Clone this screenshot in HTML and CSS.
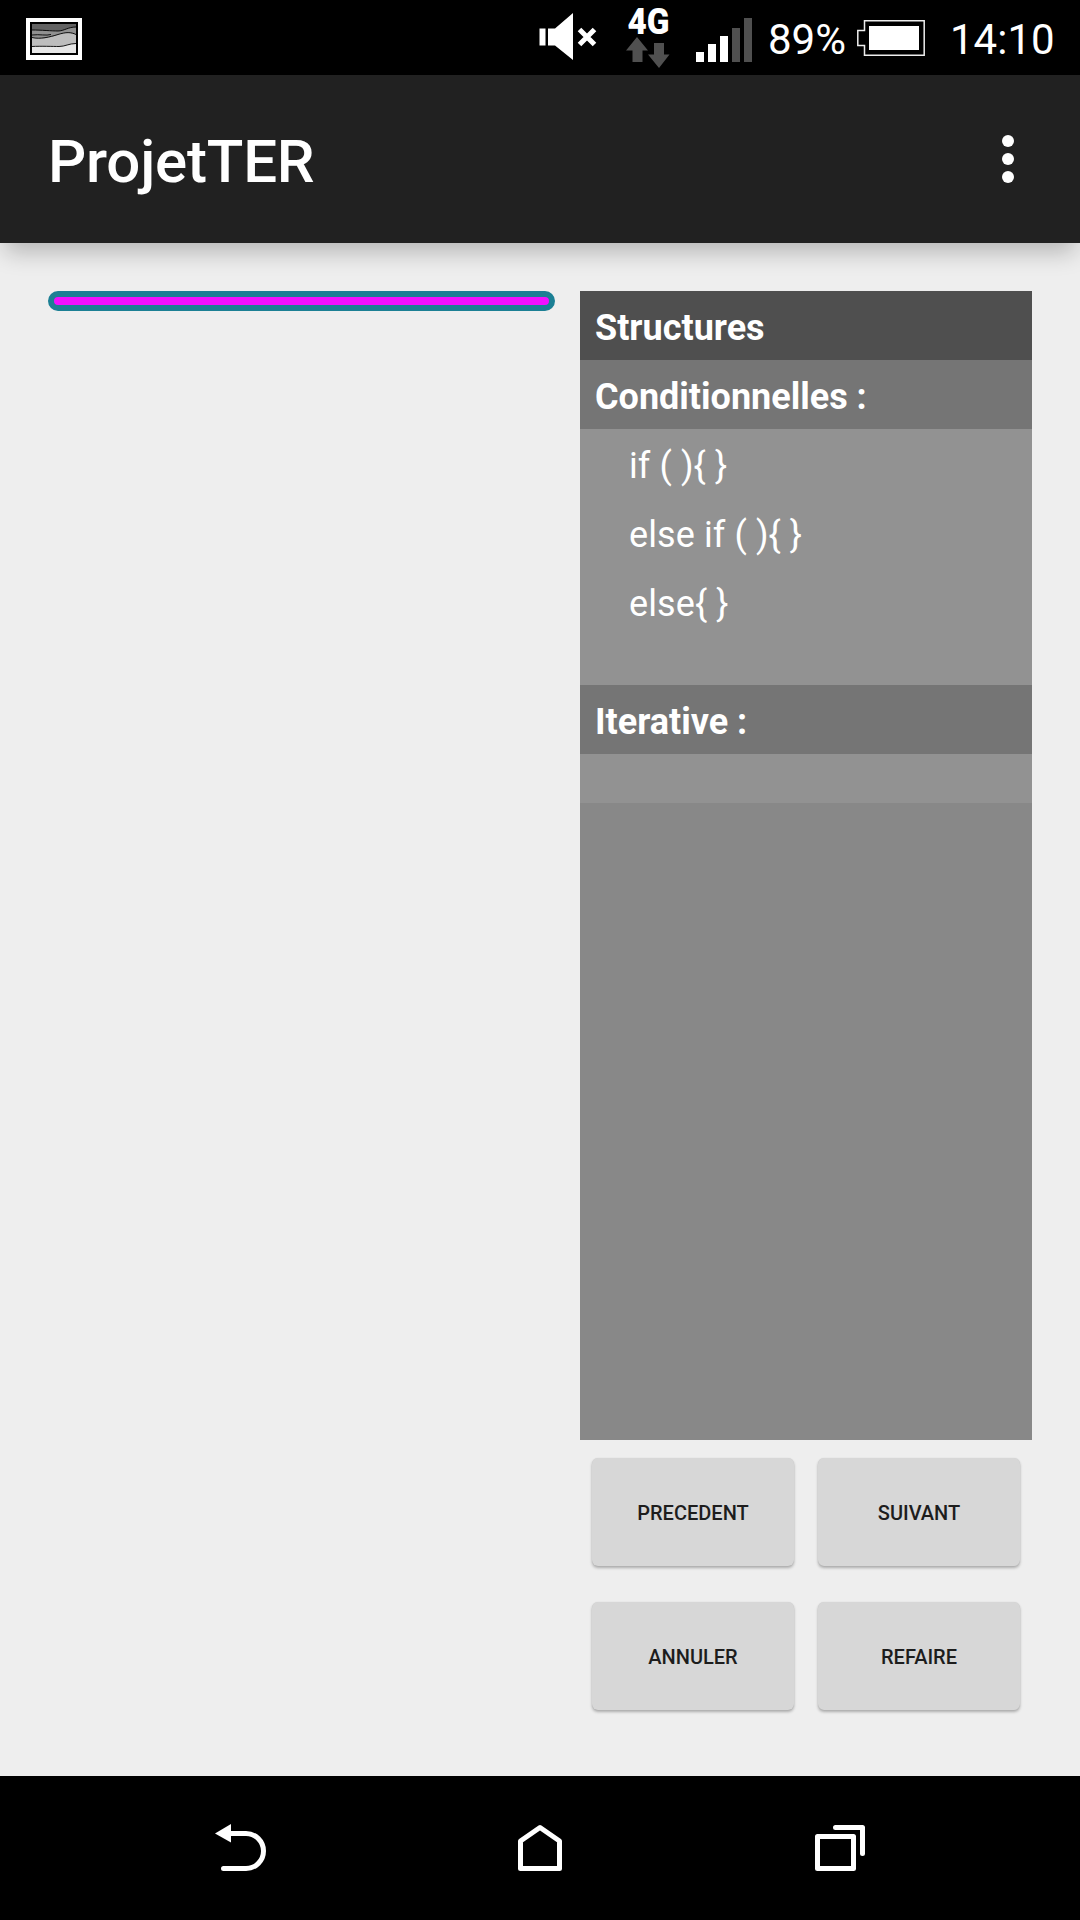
FILE: index.html
```html
<!DOCTYPE html>
<html lang="fr">
<head>
<meta charset="utf-8">
<title>ProjetTER</title>
<link rel="stylesheet" href="styles.css">
</head>
<body>
<div class="screen">
  <div class="status-bar">
    <svg class="status-picture" width="56" height="42" viewBox="0 0 56 42">
      <path fill="#fff" d="M0 0h56v42H0z"/>
      <path fill="#000" d="M4 4h48v33H4z"/>
      <path fill="#e6e6e6" d="M6 6h44v29H6z"/>
      <path fill="#bdbdbd" d="M6 6h44v19.500c-7 0-11 3-17 3s-18-.5-27 0z"/>
      <path fill="#909090" d="M6 6h44v10.500c-5-2-13-2-18 0-8 3.500-18 5-26 3z"/>
      <path fill="#626262" d="M6 6h44v3c-8 0-12 4-18 4s-17-1-26-1z"/>
      <path fill="none" stroke="#000" stroke-width=".9" d="M6 28.500c9-.5 21 0 27 0s10-3 17-3M6 19.500c8 2 18-.5 26-3s13-2.500 18 0M6 17c8-1 14 1 19-.5M6 12c9 0 20 1 26 1s10-4 18-4"/>
    </svg>
    <svg class="status-icons" width="216" height="75" viewBox="536 0 216 75">
      <path fill="#fff" d="M539.500 28.500h6v17h-6zM548 28.500h7L573 13v47l-18-14.500h-7z"/>
      <path fill="none" stroke="#fff" stroke-width="5" d="m579.500 29.500 15 15m0-15-15 15"/>
      <text class="network" x="627.500" y="33.500" textLength="42" lengthAdjust="spacingAndGlyphs">4G</text>
      <path fill="#505050" d="M637 37l11 13.500h-5.500V62h-10V50.500H626zM654 43h10v11.500h5.500L659 68l-11-13.500h6z"/>
      <path fill="#fff" d="M696 52h8v10h-8zM708 44h8v18h-8zM720 36h8v26h-8z"/>
      <path fill="#505050" d="M732 28h8v34h-8zM744 18h8v44h-8z"/>
    </svg>
    <span class="battery-level">89%</span>
    <svg class="battery" width="68" height="36" viewBox="0 0 68 36">
      <path fill="none" stroke="#eee" stroke-width="1.500" d="M7.500.8h59.700v34.400H7.500V25.500H.8V10.500h6.700z"/>
      <path fill="#fff" d="M12 6h50v24H12z"/>
    </svg>
    <span class="clock">14:10</span>
  </div>
  <header class="app-bar">
    <h1 class="title">ProjetTER</h1>
    <svg width="12" height="48" viewBox="0 0 12 48" fill="#fff"><circle cx="6" cy="6" r="6"/><circle cx="6" cy="24" r="6"/><circle cx="6" cy="42" r="6"/></svg>
  </header>
  <main class="content">
    <div class="editor"></div>
    <aside class="side">
      <section class="panel">
        <h2 class="heading heading-main">Structures</h2>
        <h3 class="heading">Conditionnelles :</h3>
        <ul class="items">
          <li class="item">if ( ){ }</li>
          <li class="item">else if ( ){ }</li>
          <li class="item">else{ }</li>
        </ul>
        <h3 class="heading">Iterative :</h3>
        <ul class="items"></ul>
      </section>
      <div class="buttons">
        <button class="button">PRECEDENT</button>
        <button class="button">SUIVANT</button>
        <button class="button">ANNULER</button>
        <button class="button">REFAIRE</button>
      </div>
    </aside>
  </main>
  <nav class="nav-bar">
    <svg width="52" height="48" viewBox="0 0 52 48">
      <path fill="#fff" d="M0 10.500 16 1v18.500z"/>
      <path fill="none" stroke="#fff" stroke-width="5" stroke-linecap="round" d="M14 10.500h17a17.500 17.500 0 0 1 0 35H8.500"/>
    </svg>
    <svg class="home" width="44" height="48" viewBox="0 0 44 48">
      <path fill="none" stroke="#fff" stroke-width="5" stroke-linejoin="round" d="M2.500 18 22 4.500 41.500 18v27.500h-39z"/>
    </svg>
    <svg width="50" height="48" viewBox="0 0 50 48">
      <path fill="none" stroke="#fff" stroke-width="5" stroke-linejoin="round" stroke-linecap="round" d="M2.500 13.500h36v32h-36zM20.500 4.500h27v26"/>
    </svg>
  </nav>
</div>
</body>
</html>
```
FILE: styles.css
```css
* { box-sizing: border-box; margin: 0; padding: 0; }

body {
  font-family: Roboto, sans-serif;
  background: #eee;
}

svg { display: block; flex: none; }

.screen {
  display: flex;
  flex-direction: column;
  width: 1080px;
  height: 1920px;
  overflow: hidden;
}

.status-bar {
  display: flex;
  align-items: center;
  height: 75px;
  padding: 0 24px 0 26px;
  background: #000;
  color: #fff;
  font-size: 42px;
  line-height: 48px;
}

.status-picture { margin: 2px auto 0 0; }
.status-icons { margin-right: 16px; }
.network { font-weight: 900; font-size: 36px; fill: #fff; }
.battery-level { width: 89px; padding-top: 5px; }
.battery { margin-right: 25px; }
.clock { width: 106px; padding-top: 5px; }

.app-bar {
  display: flex;
  align-items: center;
  justify-content: space-between;
  height: 168px;
  padding: 0 66px 0 48px;
  background: #212121;
  color: #fff;
  box-shadow: 0 14px 22px -5px rgba(0, 0, 0, .24);
}

.title {
  padding-top: 5px;
  font-size: 60px;
  font-weight: 500;
  line-height: 70px;
  letter-spacing: -.2px;
}

.content {
  display: flex;
  gap: 25px;
  flex: 1;
  padding: 48px;
}

.editor {
  width: 507px;
  height: 20px;
  border: 6px solid #1b7f94;
  border-radius: 10px;
  background: #f010ff;
}

.side { width: 452px; }

.panel {
  height: 1149px;
  background: #888;
  color: #fff;
}

.heading {
  height: 69px;
  padding: 3px 15px 0;
  background: #757575;
  font-size: 36px;
  font-weight: 700;
  line-height: 69px;
}

.heading-main { background: #4f4f4f; }

.items {
  padding: 0 48px 49px;
  background: #929292;
  list-style: none;
}

.item {
  height: 69px;
  padding: 3px 0 0 1px;
  font-size: 36px;
  line-height: 69px;
  letter-spacing: .1px;
}

.buttons {
  display: grid;
  grid-template-columns: 202px 202px;
  grid-auto-rows: 108px;
  gap: 36px 24px;
  padding: 18px 12px;
}

.button {
  padding-top: 2px;
  border: 0;
  border-radius: 6px;
  background: #d7d7d7;
  box-shadow: 0 2px 3px rgba(0, 0, 0, .28), 0 0 1px rgba(0, 0, 0, .12);
  color: #1d1d1d;
  font: 500 20px/25px Roboto, sans-serif;
}

.nav-bar {
  display: flex;
  justify-content: space-between;
  align-items: flex-start;
  height: 144px;
  padding: 47px 215px 0;
  background: #000;
}

.home { margin: 0 1px 0 -1px; }
```
